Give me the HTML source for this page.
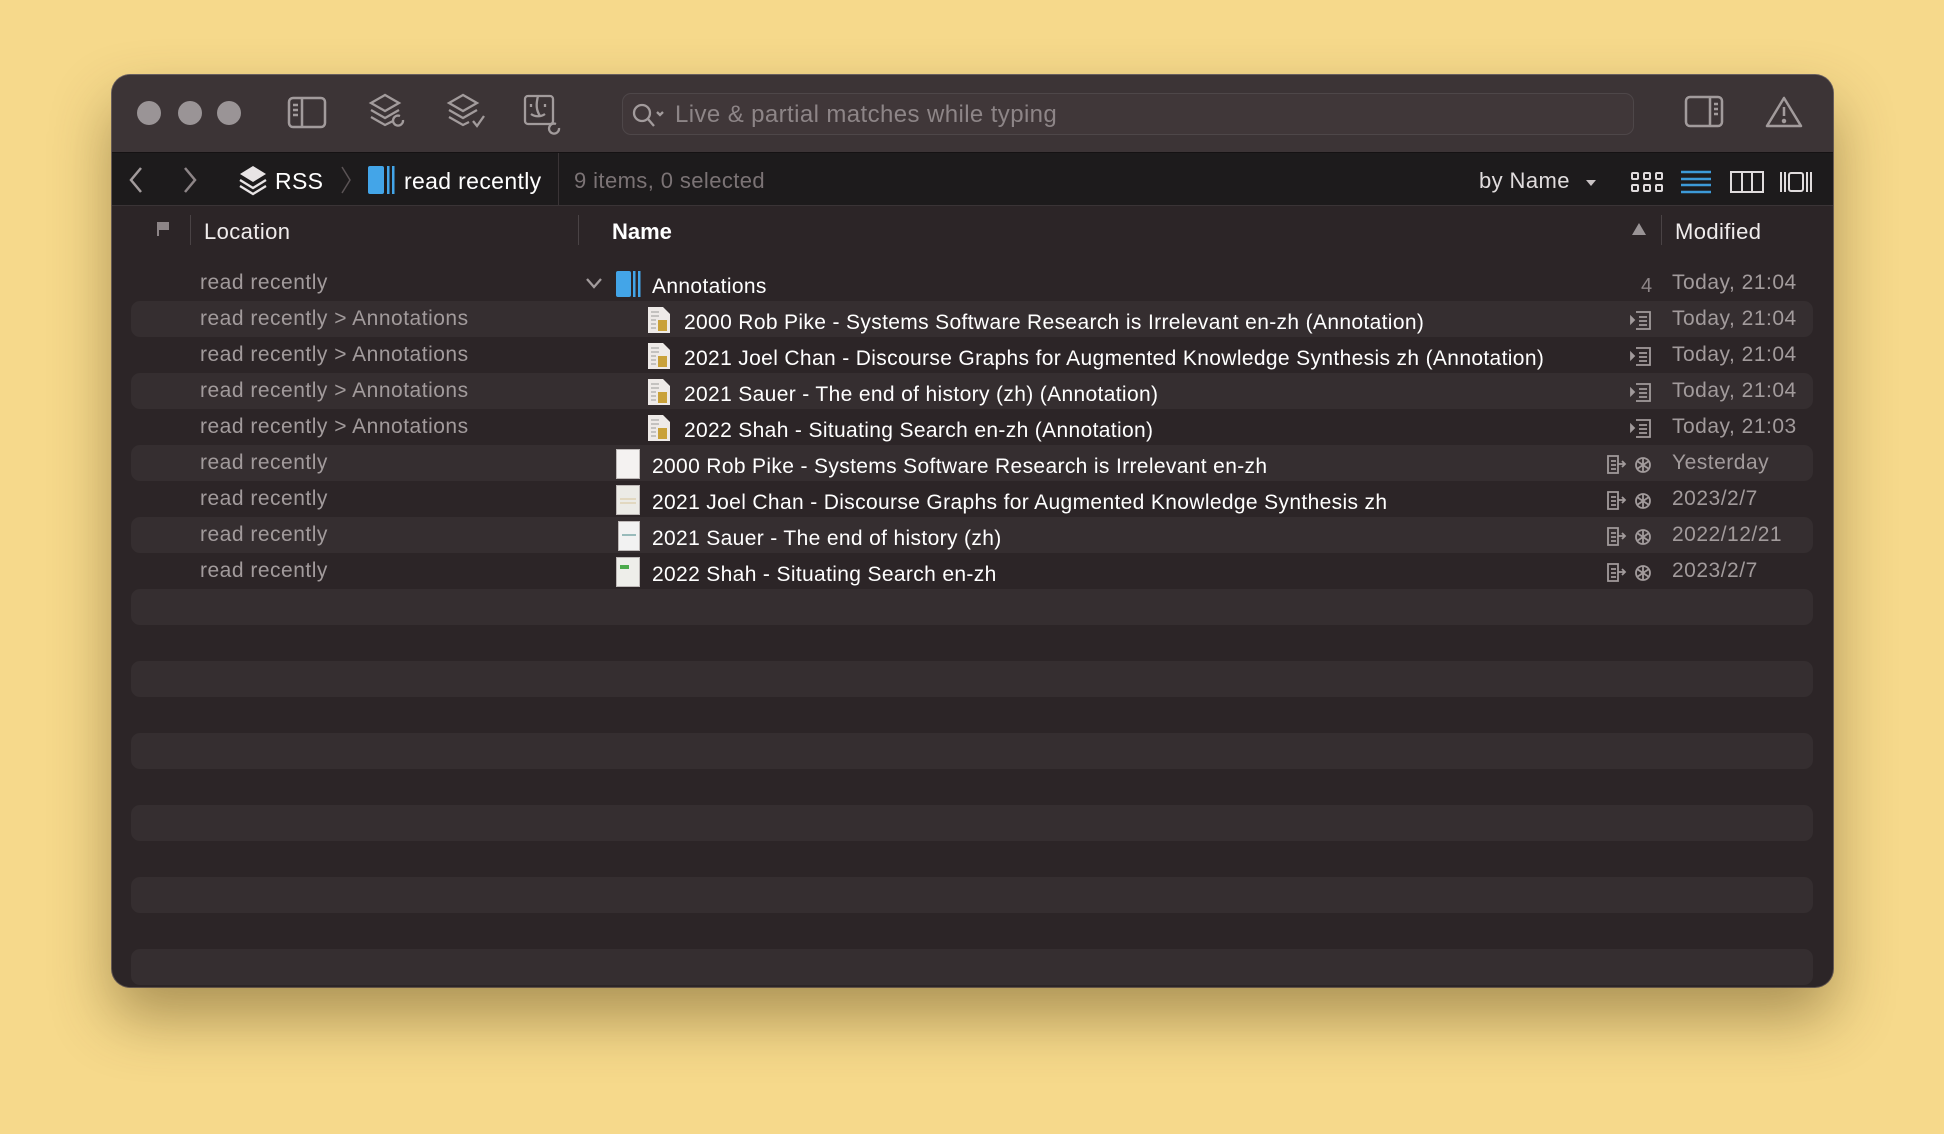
<!DOCTYPE html>
<html><head><meta charset="utf-8"><style>
*{margin:0;padding:0;box-sizing:border-box}
body{width:1944px;height:1134px;background:#f6d98b;font-family:"Liberation Sans",sans-serif;position:relative;overflow:hidden}
.win{position:absolute;left:112px;top:75px;width:1721px;height:912px;background:#2c2527;border-radius:18px;overflow:hidden;box-shadow:0 30px 60px rgba(80,60,20,.45),0 0 0 1px #6b6264}
.tb{position:absolute;left:0;top:0;width:100%;height:78px;background:#3c3436;border-bottom:1px solid #151213}
.pb{position:absolute;left:0;top:78px;width:100%;height:53px;background:#1d1b1c;border-bottom:1px solid #3a3436}
.a{position:absolute;white-space:nowrap}
.dot{position:absolute;width:24px;height:24px;border-radius:50%;background:#9a9496;top:26px}
.search{position:absolute;left:510px;top:18px;width:1012px;height:42px;border:1px solid #4e4749;border-radius:9px;background:#403739}
.t{color:#fff;font-size:21px;letter-spacing:0.35px}
.g{color:#a29b9c;font-size:21px;letter-spacing:0.5px}
.nm{margin-top:2px}
.stripe{position:absolute;left:19px;width:1682px;height:36px;background:#352e30;border-radius:9px}
svg{position:absolute}
</style></head><body>
<div class="win">
 <div class="tb">
  <div class="dot" style="left:25px"></div><div class="dot" style="left:66px"></div><div class="dot" style="left:105px"></div>
  <svg style="left:175px;top:21px" width="40" height="34" viewBox="0 0 40 34" fill="none" stroke="#a29b9c" stroke-width="2.5"><rect x="2" y="2" width="36" height="29" rx="4"/><line x1="15" y1="2" x2="15" y2="31"/><line x1="6" y1="9" x2="11" y2="9"/><line x1="6" y1="14" x2="11" y2="14"/><line x1="6" y1="19" x2="11" y2="19"/></svg>
  <svg style="left:255px;top:17px" width="42" height="42" viewBox="0 0 42 42" fill="none" stroke="#a29b9c" stroke-width="2.3"><path d="M18 3L4 11l14 8 14-8z"/><path d="M4 18l14 8 14-8"/><path d="M4 25l14 8 8-4"/><path d="M36 28a5 5 0 1 1-3-4"/></svg>
  <svg style="left:333px;top:17px" width="42" height="42" viewBox="0 0 42 42" fill="none" stroke="#a29b9c" stroke-width="2.3"><path d="M18 3L4 11l14 8 14-8z"/><path d="M4 18l14 8 14-8"/><path d="M4 25l14 8 6-3"/><path d="M28 29l4 5 7-10"/></svg>
  <svg style="left:410px;top:19px" width="40" height="42" viewBox="0 0 40 42" fill="none" stroke="#a29b9c" stroke-width="2.3"><rect x="3" y="2" width="28" height="28" rx="3"/><path d="M16 2c-2 8-2 14 2 20M9 10v3M23 10v3M9 20c4 3 10 3 14 0"/><path d="M37 34a5 5 0 1 1-3-4"/></svg>
  <div class="search"><svg style="left:8px;top:8px" width="36" height="26" viewBox="0 0 36 26" fill="none" stroke="#a29b9c" stroke-width="2.3"><circle cx="11" cy="11" r="8"/><path d="M17 17l6 7M26 10l3 3 3-3"/></svg><span class="a" style="left:52px;top:7px;font-size:24px;letter-spacing:0.4px;color:#8d8587">Live &amp; partial matches while typing</span></div>
  <svg style="left:1572px;top:20px" width="40" height="34" viewBox="0 0 40 34" fill="none" stroke="#a29b9c" stroke-width="2.5"><rect x="2" y="2" width="36" height="29" rx="4"/><line x1="26" y1="2" x2="26" y2="31"/><line x1="30" y1="9" x2="34" y2="9"/><line x1="30" y1="14" x2="34" y2="14"/><line x1="30" y1="19" x2="34" y2="19"/></svg>
  <svg style="left:1653px;top:20px" width="38" height="34" viewBox="0 0 38 34" fill="none" stroke="#a29b9c" stroke-width="2.5"><path d="M19 3L2 31h34z" stroke-linejoin="round"/><line x1="19" y1="12" x2="19" y2="21"/><circle cx="19" cy="26" r="1" fill="#a29b9c"/></svg>
 </div>
 <div class="pb">
  <svg style="left:16px;top:13px" width="16" height="28" viewBox="0 0 16 28" fill="none" stroke="#a29b9c" stroke-width="2.5"><path d="M13 2L3 14l10 12"/></svg>
  <svg style="left:70px;top:13px" width="16" height="28" viewBox="0 0 16 28" fill="none" stroke="#8d8587" stroke-width="2.5"><path d="M3 2l10 12-10 12"/></svg>
  <svg style="left:125px;top:11px" width="32" height="32" viewBox="0 0 32 32"><path d="M16 2L3 10l13 8 13-8z" fill="#e8e4e5"/><path d="M3 16l13 8 13-8M3 22l13 8 13-8" fill="none" stroke="#e8e4e5" stroke-width="2.3"/></svg>
  <span class="a t" style="left:163px;top:15px;font-size:23px">RSS</span>
  <svg style="left:228px;top:12px" width="12" height="30" viewBox="0 0 12 30" fill="none" stroke="#5a5355" stroke-width="1.5"><path d="M2 2l8 13-8 13"/></svg>
  <svg style="left:255px;top:12px" width="28" height="30" viewBox="0 0 28 30"><rect x="1" y="1" width="16" height="28" rx="2" fill="#43a5e8"/><rect x="20" y="1" width="2.5" height="28" fill="#43a5e8"/><rect x="25" y="1" width="2.5" height="28" fill="#43a5e8"/></svg>
  <span class="a t" style="left:292px;top:15px;font-size:23px">read recently</span>
  <div class="a" style="left:446px;top:0;width:1px;height:53px;background:#3a3436"></div>
  <span class="a" style="left:462px;top:15px;font-size:22px;letter-spacing:0.4px;color:#7b7375">9 items, 0 selected</span>
  <span class="a" style="left:1367px;top:15px;font-size:22px;letter-spacing:0.4px;color:#e0dcdd">by Name</span>
  <svg style="left:1473px;top:26px" width="12" height="8"><path d="M1 1h10L6 7z" fill="#c9c3c4"/></svg>
  <svg style="left:1518px;top:18px" width="34" height="22" viewBox="0 0 34 22" fill="none" stroke="#e0dcdd" stroke-width="2"><rect x="2" y="2" width="6" height="6" rx="1"/><rect x="14" y="2" width="6" height="6" rx="1"/><rect x="26" y="2" width="6" height="6" rx="1"/><rect x="2" y="14" width="6" height="6" rx="1"/><rect x="14" y="14" width="6" height="6" rx="1"/><rect x="26" y="14" width="6" height="6" rx="1"/></svg>
  <svg style="left:1568px;top:17px" width="32" height="24" viewBox="0 0 32 24" stroke="#3d9ad8" stroke-width="2.5"><line x1="1" y1="2" x2="31" y2="2"/><line x1="1" y1="9" x2="31" y2="9"/><line x1="1" y1="15" x2="31" y2="15"/><line x1="1" y1="22" x2="31" y2="22"/></svg>
  <svg style="left:1618px;top:18px" width="34" height="22" viewBox="0 0 34 22" fill="none" stroke="#e0dcdd" stroke-width="2"><rect x="1" y="1" width="32" height="20"/><line x1="12" y1="1" x2="12" y2="21"/><line x1="22" y1="1" x2="22" y2="21"/></svg>
  <svg style="left:1667px;top:18px" width="34" height="22" viewBox="0 0 34 22" fill="none" stroke="#e0dcdd" stroke-width="2"><line x1="2" y1="1" x2="2" y2="21"/><line x1="6" y1="1" x2="6" y2="21"/><rect x="10" y="2" width="14" height="18" rx="2"/><line x1="28" y1="1" x2="28" y2="21"/><line x1="32" y1="1" x2="32" y2="21"/></svg>
 </div>
 <!-- header -->
 <svg style="left:44px;top:146px" width="14" height="16"><rect x="1" y="1" width="2" height="14" fill="#8d8587"/><rect x="3" y="1" width="10" height="8" fill="#8d8587"/></svg>
 <div class="a" style="left:78px;top:140px;width:1px;height:30px;background:#4a4345"></div>
 <span class="a" style="left:92px;top:144px;font-size:22px;letter-spacing:0.4px;color:#f0ecec">Location</span>
 <div class="a" style="left:466px;top:140px;width:1px;height:30px;background:#4a4345"></div>
 <span class="a" style="left:500px;top:144px;font-size:22px;font-weight:bold;color:#fff">Name</span>
 <svg style="left:1519px;top:147px" width="16" height="14"><path d="M1 13h14L8 1z" fill="#9a9496"/></svg>
 <div class="a" style="left:1549px;top:140px;width:1px;height:30px;background:#4a4345"></div>
 <span class="a" style="left:1563px;top:144px;font-size:22px;letter-spacing:0.4px;color:#f0ecec">Modified</span>
 <!-- stripes -->
 <div class="stripe" style="top:226px"></div><div class="stripe" style="top:298px"></div><div class="stripe" style="top:370px"></div><div class="stripe" style="top:442px"></div>
 <div class="stripe" style="top:514px"></div><div class="stripe" style="top:586px"></div><div class="stripe" style="top:658px"></div><div class="stripe" style="top:730px"></div><div class="stripe" style="top:802px"></div><div class="stripe" style="top:874px"></div>
 <!-- location col -->
 <span class="a g" style="left:88px;top:196px">read recently</span>
 <span class="a g" style="left:88px;top:232px">read recently &gt; Annotations</span>
 <span class="a g" style="left:88px;top:268px">read recently &gt; Annotations</span>
 <span class="a g" style="left:88px;top:304px">read recently &gt; Annotations</span>
 <span class="a g" style="left:88px;top:340px">read recently &gt; Annotations</span>
 <span class="a g" style="left:88px;top:376px">read recently</span>
 <span class="a g" style="left:88px;top:412px">read recently</span>
 <span class="a g" style="left:88px;top:448px">read recently</span>
 <span class="a g" style="left:88px;top:484px">read recently</span>
 <!-- names -->
 <svg style="left:473px;top:202px" width="18" height="12" fill="none" stroke="#a29b9c" stroke-width="2.3"><path d="M2 2l7 8 7-8"/></svg>
 <svg style="left:503px;top:195px" width="26" height="28" viewBox="0 0 26 28"><rect x="1" y="1" width="15" height="26" rx="2" fill="#43a5e8"/><rect x="18" y="1" width="2.5" height="26" fill="#43a5e8"/><rect x="23" y="1" width="2.5" height="26" fill="#43a5e8"/></svg>
 <span class="a t nm" style="left:540px;top:198px">Annotations</span>
 <span class="a t nm" style="left:572px;top:234px">2000 Rob Pike - Systems Software Research is Irrelevant en-zh (Annotation)</span>
 <span class="a t nm" style="left:572px;top:270px">2021 Joel Chan - Discourse Graphs for Augmented Knowledge Synthesis zh (Annotation)</span>
 <span class="a t nm" style="left:572px;top:306px">2021 Sauer - The end of history (zh) (Annotation)</span>
 <span class="a t nm" style="left:572px;top:342px">2022 Shah - Situating Search en-zh (Annotation)</span>
 <span class="a t nm" style="left:540px;top:378px">2000 Rob Pike - Systems Software Research is Irrelevant en-zh</span>
 <span class="a t nm" style="left:540px;top:414px">2021 Joel Chan - Discourse Graphs for Augmented Knowledge Synthesis zh</span>
 <span class="a t nm" style="left:540px;top:450px">2021 Sauer - The end of history (zh)</span>
 <span class="a t nm" style="left:540px;top:486px">2022 Shah - Situating Search en-zh</span>
 <!-- annotation doc icons -->
 <svg style="left:535px;top:231px" width="24" height="28" viewBox="0 0 24 28"><path d="M1 1h15l7 7v19H1z" fill="#eeeae8"/><rect x="11" y="14" width="9" height="11" fill="#c9a13a"/><path d="M4 6h8M4 10h8M4 14h5M4 18h5M4 22h5" stroke="#999" stroke-width="1"/></svg>
 <svg style="left:535px;top:267px" width="24" height="28" viewBox="0 0 24 28"><path d="M1 1h15l7 7v19H1z" fill="#eeeae8"/><rect x="11" y="14" width="9" height="11" fill="#c9a13a"/><path d="M4 6h8M4 10h8M4 14h5M4 18h5M4 22h5" stroke="#999" stroke-width="1"/></svg>
 <svg style="left:535px;top:303px" width="24" height="28" viewBox="0 0 24 28"><path d="M1 1h15l7 7v19H1z" fill="#eeeae8"/><rect x="11" y="14" width="9" height="11" fill="#c9a13a"/><path d="M4 6h8M4 10h8M4 14h5M4 18h5M4 22h5" stroke="#999" stroke-width="1"/></svg>
 <svg style="left:535px;top:339px" width="24" height="28" viewBox="0 0 24 28"><path d="M1 1h15l7 7v19H1z" fill="#eeeae8"/><rect x="11" y="14" width="9" height="11" fill="#c9a13a"/><path d="M4 6h8M4 10h8M4 14h5M4 18h5M4 22h5" stroke="#999" stroke-width="1"/></svg>
 <!-- pdf thumbs -->
 <svg style="left:504px;top:374px" width="24" height="30"><rect x="0" y="0" width="24" height="30" fill="#bdb8b7"/><rect x="1" y="1" width="22" height="28" fill="#f4f2f1"/></svg>
 <svg style="left:504px;top:410px" width="24" height="30"><rect x="0" y="0" width="24" height="30" fill="#bdb8b7"/><rect x="1" y="1" width="22" height="28" fill="#ecebe6"/><path d="M4 14h16M4 18h16" stroke="#d8c49a"/></svg>
 <svg style="left:506px;top:446px" width="22" height="30"><rect x="0" y="0" width="22" height="30" fill="#bdb8b7"/><rect x="1" y="1" width="20" height="28" fill="#f2f2f2"/><path d="M4 14h14" stroke="#9bb" stroke-width="2"/></svg>
 <svg style="left:504px;top:482px" width="24" height="30"><rect x="0" y="0" width="24" height="30" fill="#bdb8b7"/><rect x="1" y="1" width="22" height="28" fill="#eeeeea"/><rect x="4" y="8" width="9" height="4" fill="#4caa4c"/></svg>
 <!-- right-side icons -->
 <span class="a" style="left:1529px;top:200px;font-size:20px;color:#8d8587">4</span>
 <svg style="left:1518px;top:235px" width="22" height="20" fill="none" stroke="#a29b9c" stroke-width="1.8"><path d="M1 7l3 3-3 3z" fill="#a29b9c"/><path d="M6 2h14v17H6M9 7h8M9 11h8M9 15h8"/></svg>
 <svg style="left:1518px;top:271px" width="22" height="20" fill="none" stroke="#a29b9c" stroke-width="1.8"><path d="M1 7l3 3-3 3z" fill="#a29b9c"/><path d="M6 2h14v17H6M9 7h8M9 11h8M9 15h8"/></svg>
 <svg style="left:1518px;top:307px" width="22" height="20" fill="none" stroke="#a29b9c" stroke-width="1.8"><path d="M1 7l3 3-3 3z" fill="#a29b9c"/><path d="M6 2h14v17H6M9 7h8M9 11h8M9 15h8"/></svg>
 <svg style="left:1518px;top:343px" width="22" height="20" fill="none" stroke="#a29b9c" stroke-width="1.8"><path d="M1 7l3 3-3 3z" fill="#a29b9c"/><path d="M6 2h14v17H6M9 7h8M9 11h8M9 15h8"/></svg>
 <svg style="left:1494px;top:379px" width="52" height="22" fill="none" stroke="#a29b9c" stroke-width="1.8"><path d="M2 2h10v17H2zM5 7h5M5 11h5M5 15h5M12 10h7M16 7l3 3-3 3"/><circle cx="37" cy="11" r="7"/><path d="M37 4v14M31 7l12 8M31 15l12-8"/></svg>
 <svg style="left:1494px;top:415px" width="52" height="22" fill="none" stroke="#a29b9c" stroke-width="1.8"><path d="M2 2h10v17H2zM5 7h5M5 11h5M5 15h5M12 10h7M16 7l3 3-3 3"/><circle cx="37" cy="11" r="7"/><path d="M37 4v14M31 7l12 8M31 15l12-8"/></svg>
 <svg style="left:1494px;top:451px" width="52" height="22" fill="none" stroke="#a29b9c" stroke-width="1.8"><path d="M2 2h10v17H2zM5 7h5M5 11h5M5 15h5M12 10h7M16 7l3 3-3 3"/><circle cx="37" cy="11" r="7"/><path d="M37 4v14M31 7l12 8M31 15l12-8"/></svg>
 <svg style="left:1494px;top:487px" width="52" height="22" fill="none" stroke="#a29b9c" stroke-width="1.8"><path d="M2 2h10v17H2zM5 7h5M5 11h5M5 15h5M12 10h7M16 7l3 3-3 3"/><circle cx="37" cy="11" r="7"/><path d="M37 4v14M31 7l12 8M31 15l12-8"/></svg>
 <span class="a g" style="left:1560px;top:196px">Today, 21:04</span>
 <span class="a g" style="left:1560px;top:232px">Today, 21:04</span>
 <span class="a g" style="left:1560px;top:268px">Today, 21:04</span>
 <span class="a g" style="left:1560px;top:304px">Today, 21:04</span>
 <span class="a g" style="left:1560px;top:340px">Today, 21:03</span>
 <span class="a g" style="left:1560px;top:376px">Yesterday</span>
 <span class="a g" style="left:1560px;top:412px">2023/2/7</span>
 <span class="a g" style="left:1560px;top:448px">2022/12/21</span>
 <span class="a g" style="left:1560px;top:484px">2023/2/7</span>
</div>
</body></html>
